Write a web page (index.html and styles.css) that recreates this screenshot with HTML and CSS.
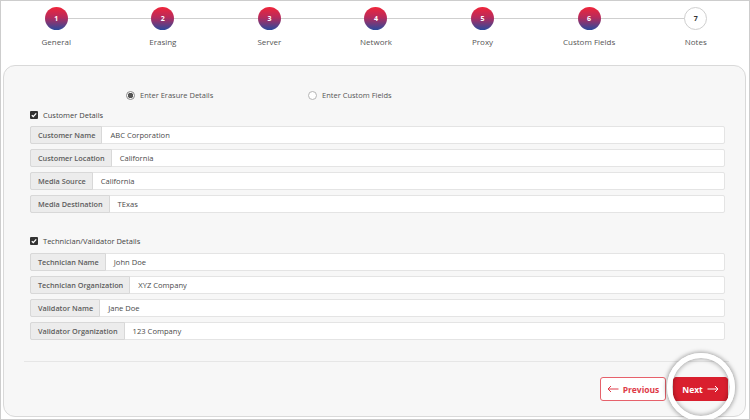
FILE: index.html
```html
<!DOCTYPE html>
<html>
<head>
<meta charset="utf-8">
<link rel="stylesheet" href="styles.css">
</head>
<body>
<div class="frame">
  <div class="stepper">
    <div class="step"><div class="dot">1</div><div class="step-label">General</div></div>
    <div class="step"><div class="dot">2</div><div class="step-label">Erasing</div></div>
    <div class="step"><div class="dot">3</div><div class="step-label">Server</div></div>
    <div class="step"><div class="dot">4</div><div class="step-label">Network</div></div>
    <div class="step"><div class="dot">5</div><div class="step-label">Proxy</div></div>
    <div class="step"><div class="dot">6</div><div class="step-label">Custom Fields</div></div>
    <div class="step"><div class="dot dot-todo">7</div><div class="step-label">Notes</div></div>
  </div>

  <div class="panel">
    <div class="radios">
      <div class="radio-item"><span class="radio radio-on"></span>Enter Erasure Details</div>
      <div class="radio-item"><span class="radio"></span>Enter Custom Fields</div>
    </div>

    <div class="check-row"><span class="check"><svg viewBox="0 0 8 8" width="8" height="8"><path d="M1.8 4.2 L3.3 5.6 L6.2 2.4" fill="none" stroke="#fff" stroke-width="1.3"/></svg></span>Customer Details</div>
    <div class="rows">
      <div class="field"><span class="field-label">Customer Name</span><span class="field-value">ABC Corporation</span></div>
      <div class="field"><span class="field-label">Customer Location</span><span class="field-value">California</span></div>
      <div class="field"><span class="field-label">Media Source</span><span class="field-value">California</span></div>
      <div class="field"><span class="field-label">Media Destination</span><span class="field-value">TExas</span></div>
    </div>

    <div class="check-row check-row-2"><span class="check"><svg viewBox="0 0 8 8" width="8" height="8"><path d="M1.8 4.2 L3.3 5.6 L6.2 2.4" fill="none" stroke="#fff" stroke-width="1.3"/></svg></span>Technician/Validator Details</div>
    <div class="rows rows-2">
      <div class="field"><span class="field-label">Technician Name</span><span class="field-value">John Doe</span></div>
      <div class="field"><span class="field-label">Technician Organization</span><span class="field-value">XYZ Company</span></div>
      <div class="field"><span class="field-label">Validator Name</span><span class="field-value">Jane Doe</span></div>
      <div class="field"><span class="field-label">Validator Organization</span><span class="field-value">123 Company</span></div>
    </div>

    <div class="separator"></div>

    <div class="actions">
      <button class="btn btn-prev"><svg viewBox="0 0 12 8" width="12" height="8"><path d="M11.5 4 H1 M4 1 L1 4 L4 7" fill="none" stroke="currentColor" stroke-width="1"/></svg>Previous</button>
      <button class="btn btn-next">Next<svg viewBox="0 0 12 8" width="12" height="8"><path d="M0.5 4 H11 M8 1 L11 4 L8 7" fill="none" stroke="currentColor" stroke-width="1"/></svg></button>
    </div>
  </div>

  <div class="highlight"></div>
</div>
</body>
</html>
```

FILE: styles.css
```css
* { box-sizing: border-box; }

body {
  margin: 0;
  font-family: "Open Sans", "Liberation Sans", sans-serif;
  background: #fff;
}

.frame {
  position: relative;
  width: 750px;
  height: 420px;
  border: 1px solid #cdcdcd;
  background: #fff;
  display: flex;
  flex-direction: column;
  overflow: hidden;
}

/* Stepper */
.stepper {
  height: 64px;
  padding-left: 2px;
  display: grid;
  grid-template-columns: repeat(7, 1fr);
}

.step {
  position: relative;
  display: flex;
  flex-direction: column;
  align-items: center;
  padding-top: 6px;
}

.step + .step::before {
  content: "";
  position: absolute;
  top: 17px;
  left: -50%;
  right: 50%;
  height: 1px;
  background: #cfcfcf;
}

.dot {
  position: relative;
  z-index: 1;
  width: 23px;
  height: 23px;
  border-radius: 50%;
  background: linear-gradient(to bottom, #f0253a 0%, #b72b5c 45%, #2b4a9c 100%);
  color: #fff;
  font-size: 7px;
  font-weight: 700;
  display: flex;
  align-items: center;
  justify-content: center;
}

.dot-todo {
  background: #fff;
  border: 1px solid #cfcfcf;
  color: #333;
}

.step-label {
  margin-top: 6px;
  font-size: 8px;
  line-height: 11px;
  color: #555;
}

/* Panel */
.panel {
  height: 352px;
  margin: 0 3px 2px 2px;
  border: 1px solid #d9d9d9;
  border-radius: 12px;
  background: #f7f7f7;
  padding: 24px 20px 0 26px;
  display: flex;
  flex-direction: column;
}

.radios {
  display: grid;
  grid-template-columns: 182px 182px;
  margin-left: 96px;
  height: 10px;
}

.radio-item {
  display: flex;
  align-items: center;
  gap: 5px;
  font-size: 7.5px;
  line-height: 10px;
  color: #555;
}

.radio {
  width: 9px;
  height: 9px;
  border-radius: 50%;
  border: 1px solid #b5b5b5;
  background: #fff;
  flex-shrink: 0;
}

.radio-on {
  border-color: #8a8a8a;
  background: radial-gradient(circle, #555 0 2.5px, #fff 3px);
}

.check-row {
  display: flex;
  align-items: center;
  gap: 5px;
  height: 10px;
  margin-top: 10px;
  font-size: 7.5px;
  color: #444;
}

.check-row-2 {
  margin-top: 23px;
}

.check {
  width: 8px;
  height: 8px;
  border-radius: 1px;
  background: #333;
  display: flex;
}

.rows {
  display: flex;
  flex-direction: column;
  gap: 5px;
  margin-top: 6px;
}

.rows-2 {
  margin-top: 7px;
}

.field {
  display: flex;
  height: 18px;
  background: #fff;
  border: 1px solid #e4e4e4;
  border-radius: 2px;
}

.field-label {
  display: flex;
  align-items: center;
  padding: 0 6px 0 7px;
  margin: -1px 0 -1px -1px;
  background: #ececec;
  border: 1px solid #d8d8d8;
  border-radius: 2px 0 0 2px;
  font-size: 7.3px;
  font-weight: 600;
  color: #5c5c5c;
  white-space: nowrap;
}

.field-value {
  display: flex;
  align-items: center;
  padding-left: 8px;
  font-size: 7.6px;
  color: #4a4a4a;
}

.separator {
  height: 1px;
  background: #e6e6e6;
  margin: 21px -4px 0 -6px;
}

.actions {
  display: flex;
  justify-content: flex-end;
  gap: 7px;
  margin: 15px -3px 0 0;
}

.btn {
  height: 24px;
  border-radius: 3px;
  font-family: "Open Sans", "Liberation Sans", sans-serif;
  font-size: 8.5px;
  font-weight: 700;
  display: flex;
  align-items: center;
  justify-content: center;
  gap: 4px;
  padding: 0;
  cursor: pointer;
}

.btn-prev {
  width: 66px;
  background: #fff;
  border: 1px solid #e6616b;
  color: #de3b48;
}

.btn-next {
  width: 55px;
  background: #d91f2e;
  border: 1px solid #d91f2e;
  color: #fff;
}

/* Spotlight ring over the Next button */
.highlight {
  position: absolute;
  left: 666px;
  top: 352px;
  width: 68px;
  height: 68px;
  border-radius: 50%;
  border: 5px solid #fff;
  box-shadow: 0 0 4px 1px rgba(0,0,0,0.35), inset 0 0 4px 1px rgba(0,0,0,0.3);
}
```
